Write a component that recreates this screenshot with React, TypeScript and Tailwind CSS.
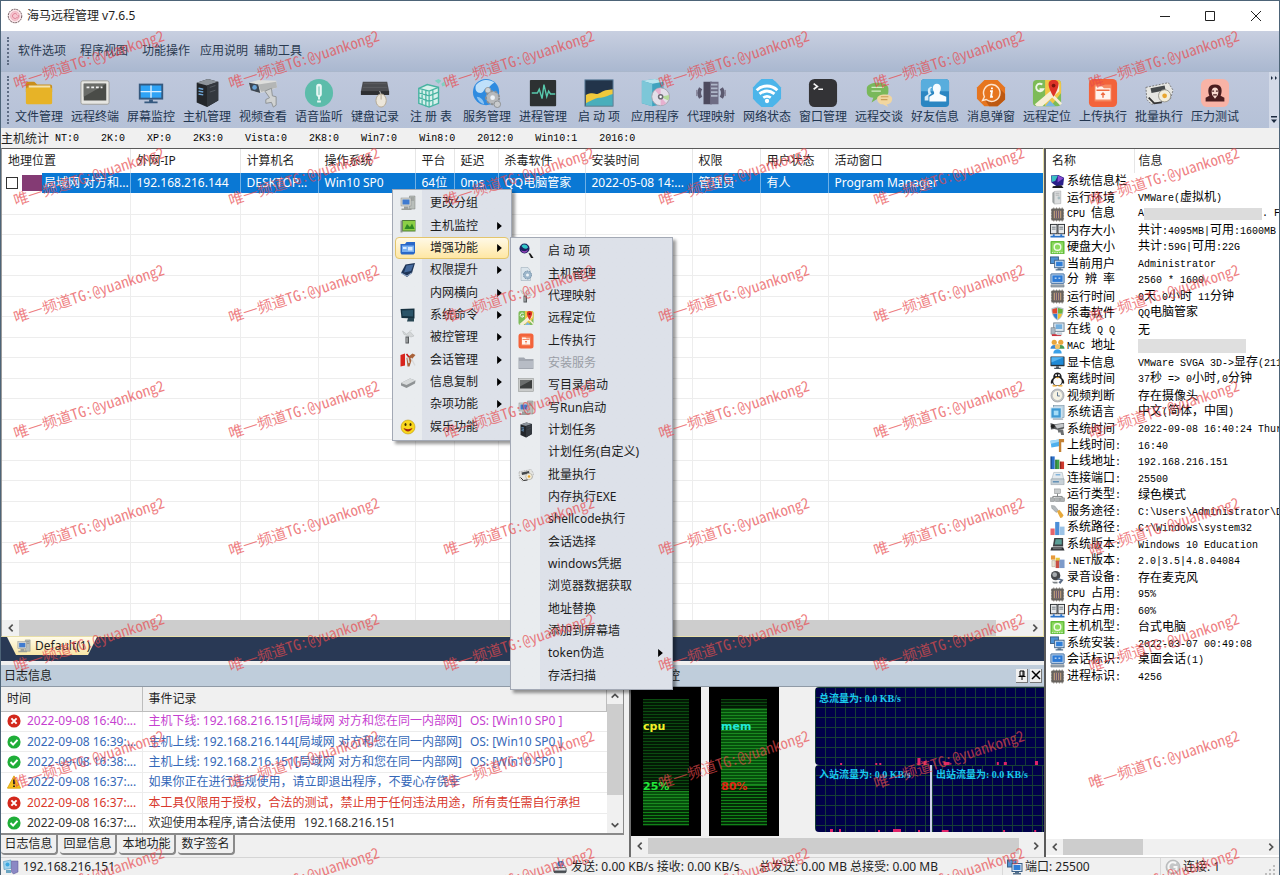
import React, { useState } from "react";

/* ---------- Icons (all drawn on a 32 x 32 grid) ---------- */

const ART: Record<string, React.ReactNode> = {
  folder: (
    <>
      <path d="M2 6a2 2 0 0 1 2-2h7l3 3h14a2 2 0 0 1 2 2v6H2z" fill="#c98f1c" />
      <path d="M5 8h23v6H5z" fill="#f2e3b0" />
      <path d="M2 12a2 2 0 0 1 2-2h24a2 2 0 0 1 2 2v14a2 2 0 0 1-2 2H4a2 2 0 0 1-2-2z" fill="#e7b327" />
    </>
  ),
  terminal: (
    <>
      <rect x="1" y="3" width="30" height="25" rx="2" fill="#e6e6e2" stroke="#9c9c98" />
      <rect x="4" y="6" width="24" height="18" fill="#4a4c48" />
      <path d="M4 6h24L4 20z" fill="#6a6c68" />
      <path d="M7 10h3M12 10h3M17 10h3M22 10h2" stroke="#f2f2f2" strokeWidth="2" />
    </>
  ),
  screen: (
    <>
      <rect x="3" y="6" width="26" height="17" fill="#35597f" />
      <rect x="5" y="8" width="22" height="13" fill="#2fa3f5" />
      <path d="M16 8v13M5 14.500h22" stroke="#d9efff" strokeWidth="1.500" />
      <path d="M14 23h4v2h-4zM9 25h14v2H9z" fill="#35597f" />
    </>
  ),
  server: (
    <>
      <path d="M5 5l12-4 11 3v20l-12 7L5 26z" fill="#23262a" />
      <path d="M5 5l12-4 11 3-12 4z" fill="#8d949b" />
      <path d="M16 8l12-4v20l-12 7z" fill="#33383e" />
      <path d="M7 11l5 1M7 14l5 1M7 17l5 1" stroke="#6fa7d8" strokeWidth="1.500" />
      <path d="M19 10l6-2M19 15l6-2" stroke="#555b61" />
    </>
  ),
  camera: (
    <>
      <path d="M1 5l10-3 19 1 1 7-12 5-8 1-9-4z" fill="#dededc" />
      <path d="M1 5l10 2 2 9-10-3z" fill="#3d4652" />
      <circle cx="7" cy="10" r="2.500" fill="#6aa3d6" />
      <path d="M11 7l19-3 1 6-17 5z" fill="#b4b6b6" />
      <path d="M18 14l7-3 1 8 4 1v9l-3 2-2-5-6 1v-4l4-2z" fill="#d0d2d2" stroke="#8d9192" />
    </>
  ),
  voice: (
    <>
      <circle cx="16" cy="16" r="15" fill="#5cbcaa" />
      <path d="M16 6a3 3 0 0 1 3 3v8a3 3 0 0 1-6 0V9a3 3 0 0 1 3-3z" fill="#e8f7f4" />
      <path d="M16 7v16M14 25h4" stroke="#e8f7f4" strokeWidth="2" />
      <path d="M16 9v9" stroke="#5cbcaa" />
    </>
  ),
  keyboard: (
    <>
      <path d="M3 4h26l2 10v4H1v-4z" fill="#4b4c50" />
      <path d="M1 14h30v4H1z" fill="#2e2f32" />
      <path d="M4 6h24M3 10h26" stroke="#5d5e62" />
      <path d="M21 14c1 2 1 3 1 4" stroke="#ddd" fill="none" />
      <ellipse cx="22.500" cy="24" rx="5.500" ry="7" fill="#ece6da" stroke="#b3a892" />
      <path d="M22.500 17v6" stroke="#b3a892" />
    </>
  ),
  registry: (
    <>
      <path d="M3 11l9-4 12 3v17l-10 4-11-4z" fill="#d7f1ec" stroke="#47b3a1" strokeWidth="1.500" />
      <path d="M3 16l11 3 10-4M3 21l11 4 10-4M14 14v17M6.500 13v15M10.500 13v17M18 12v17M3 11l11 3 10-4" stroke="#47b3a1" fill="none" strokeWidth="1.300" />
      <path d="M20 3l4-2 3 2-3 3zM27 6l3-2 1 4-3 1z" fill="#7fd0c2" />
    </>
  ),
  service: (
    <>
      <circle cx="15" cy="15" r="14" fill="#2f8be0" />
      <path d="M4 8c4-6 14-8 20-3-4 1-4 5-9 6-3 1-2 5-6 5-4 0-6-3-5-8z" fill="#bfe0fa" />
      <path d="M5 20c4 0 7 3 8 8-4-1-7-4-8-8z" fill="#8cc3f2" />
      <circle cx="22" cy="21" r="7" fill="#b7b9bb" stroke="#8d9093" strokeWidth="2" strokeDasharray="3 2" />
      <circle cx="22" cy="21" r="2.500" fill="#eef3f8" />
      <circle cx="27" cy="28" r="3.500" fill="#c9cbcd" stroke="#8d9093" />
      <circle cx="17" cy="13" r="3" fill="#cfd2d4" stroke="#9b9ea1" />
    </>
  ),
  process: (
    <>
      <rect x="2" y="2" width="28" height="28" rx="1" fill="#2d3132" />
      <path d="M4 16h6l2-4 3 10 2-15 3 13 2-6 2 3h5" stroke="#58c9ad" strokeWidth="1.500" fill="none" />
    </>
  ),
  startup: (
    <>
      <rect x="1" y="2" width="30" height="28" fill="#22344a" />
      <path d="M2 18c5-2 7-2 11-1 4 0 6-3 10-4 3 0 5-1 8-1v18H2z" fill="#f0c93c" />
      <path d="M2 27c7-4 11-6 16-6 5-1 9-3 13-4v13H2z" fill="#48aebb" />
      <rect x="1" y="2" width="30" height="28" fill="none" stroke="#5c7f9c" />
    </>
  ),
  apps: (
    <>
      <path d="M2 3l14-2 9 3v24l-12 2-11-3z" fill="#3fa3bf" />
      <path d="M2 3l14-2 9 3-12 2z" fill="#b9e4ee" />
      <path d="M2 3l11 3v24L2 27z" fill="#7cc7d8" />
      <circle cx="22" cy="20" r="9.500" fill="#e3dfe9" stroke="#a6a2ae" />
      <path d="M22 20l-6-7a9 9 0 0 1 6-2zM22 20l6 7a9 9 0 0 1-6 2z" fill="#e6b0cf" />
      <path d="M22 20l9-2a9 9 0 0 1-1 6z" fill="#b4d99a" />
      <circle cx="22" cy="20" r="3" fill="#6c6a74" />
      <circle cx="22" cy="20" r="1.300" fill="#fff" />
    </>
  ),
  proxy: (
    <>
      <path d="M8 4h9v24H8z" fill="#4d4a5e" />
      <path d="M15 4h9v24h-9z" fill="#6e6c84" />
      <path d="M16 7h7M16 11h7M16 15h7M16 19h7" stroke="#aeb6c8" strokeWidth="2" />
      <path d="M5 11c-2 3-2 7 0 10M27 11c2 3 2 7 0 10" stroke="#5c5a70" strokeWidth="4" fill="none" />
      <path d="M1 13c-1 2-1 4 0 6M31 13c1 2 1 4 0 6" stroke="#8d8ba0" strokeWidth="2" fill="none" />
    </>
  ),
  wifi: (
    <>
      <path d="M10 1h12l9 9v12l-9 9H10l-9-9V10z" fill="#4cb5ea" />
      <circle cx="16" cy="16" r="15" fill="#4cb5ea" />
      <path d="M5 13c6-6 16-6 22 0M8 17c5-4 11-4 16 0M12 21c3-2 5-2 8 0" stroke="#fff" strokeWidth="3" fill="none" />
      <circle cx="16" cy="24.500" r="2.300" fill="#fff" />
    </>
  ),
  windowcmd: (
    <>
      <rect x="1" y="1" width="30" height="30" rx="6" fill="#333336" />
      <path d="M6 6l4 3-4 3M11 12h5" stroke="#f4f4f4" strokeWidth="1.800" fill="none" />
    </>
  ),
  chat: (
    <>
      <path d="M3 11c0-8 23-8 23 0v4c0 5-6 6-10 6l-8 5 2-5c-5 0-7-3-7-6z" fill="#79b85a" />
      <path d="M8 10h13M8 14h10" stroke="#d5ecc8" strokeWidth="1.500" />
      <path d="M14 22c0-6 16-6 16 0 0 4-3 6-6 6l2 3-6-3c-4 0-6-3-6-6z" fill="#f1d6a0" />
      <path d="M18 20h8M18 23h7" stroke="#c99e55" strokeWidth="1.300" />
    </>
  ),
  friends: (
    <>
      <rect x="1" y="1" width="30" height="30" rx="4" fill="#2a86c2" />
      <path d="M1 5a4 4 0 0 1 4-4h22a4 4 0 0 1 4 4v9H1z" fill="#58addd" />
      <path d="M15 15c-2-3-2-9 3-9s5 6 3 9v2l7 3v5H10v-5l5-3z" fill="#f7fcff" />
      <path d="M11 17c-1-2-2-4-1-6 0-2 3-2 3-1-4 1-1 8 0 6l-4 3v5H5v-4l4-3c-1-3-1-6 1-7" fill="#d6ebf7" />
    </>
  ),
  popup: (
    <>
      <path d="M9 2h14l8 8v13l-8 7H9l-8-8V10z" fill="#e6751f" />
      <path d="M24 10l7 7v6l-8 7h-9l-4-6z" fill="#bd5912" />
      <path d="M16 7a9 9 0 1 1-5 16l-4 1 2-4a9 9 0 0 1 7-13z" fill="#e6751f" stroke="#fde3cd" strokeWidth="1.500" />
      <path d="M17 10v2M15 14h2l-1 6h2" stroke="#fff" strokeWidth="2" fill="none" />
    </>
  ),
  map: (
    <>
      <rect x="1" y="2" width="30" height="28" rx="4" fill="#7dbb58" />
      <path d="M14 2h13a4 4 0 0 1 4 4v10L20 30h-6z" fill="#f0c646" />
      <path d="M3 28L29 6v8L11 30H5z" fill="#f6eed6" />
      <path d="M14 30l5-6 6 6z" fill="#7ab6e3" />
      <path d="M20 17l11 11" stroke="#f6eed6" strokeWidth="3" />
      <path d="M11 7a4 4 0 1 0 1 5H8" stroke="#eef7e8" strokeWidth="2" fill="none" />
      <path d="M23 2c8 0 6 8 0 18C17 10 15 2 23 2z" fill="#dd3327" />
      <circle cx="23" cy="8" r="2" fill="#7c140d" />
    </>
  ),
  upload: (
    <>
      <rect x="1" y="1" width="30" height="30" rx="5" fill="#f3633a" />
      <rect x="7" y="7" width="18" height="18" fill="#f68a62" />
      <path d="M8 9h7l2 2h7v12H8z" fill="#fff4ee" />
      <path d="M9 13h14M16 21v-5M14 18l2-2 2 2" stroke="#ee6b42" strokeWidth="1.500" fill="none" />
    </>
  ),
  batch: (
    <>
      <path d="M2 10l24-5 5 8-3 10-20 5-5-5z" fill="#e6e6e2" stroke="#777" strokeDasharray="2 1.500" />
      <path d="M7 11l15-3 1 5-15 3z" fill="#45494b" />
      <circle cx="22" cy="19" r="6.500" fill="#f3eedb" stroke="#96958e" />
      <circle cx="22" cy="19" r="2.500" fill="#e9a62e" />
      <path d="M5 21l6 6 8-1" stroke="#333" strokeWidth="2" fill="none" />
    </>
  ),
  stress: (
    <>
      <rect x="1" y="1" width="30" height="30" rx="7" fill="#f8b3a6" />
      <path d="M16 7c8 0 8 7 6 12l4 2v4H6v-4l4-2C8 14 8 7 16 7z" fill="#4a1d1f" />
      <path d="M16 10c4 0 4 5 3 8l-3 4-3-4c-1-3-1-8 3-8z" fill="#f7d9cf" />
      <path d="M13 14h2M17 14h2M14 18h4" stroke="#4a1d1f" strokeWidth="1.300" />
    </>
  ),
  gem: (
    <>
      <circle cx="16" cy="16" r="13.500" fill="#fbe5e9" stroke="#6b5257" strokeWidth="2" strokeDasharray="4 1.500" />
      <circle cx="16" cy="16" r="9" fill="#f6c6d0" stroke="#e3a0af" />
      <path d="M20 13a5 5 0 1 0 0 6c2 2 4-1 2-5" stroke="#dd7d92" strokeWidth="1.800" fill="none" />
    </>
  ),
  pc: (
    <>
      <path d="M19 2h11v26H19z" fill="#b9beba" stroke="#7d827e" />
      <path d="M22 6h6M22 10h6" stroke="#666" />
      <rect x="2" y="6" width="20" height="16" fill="#d6d6ce" stroke="#84888a" />
      <rect x="5" y="9" width="14" height="10" fill="#3f7bd0" />
      <path d="M8 23h9v4H8zM3 27h20v3H3z" fill="#9a9e9b" />
    </>
  ),
  chipgreen: (
    <>
      <rect x="4" y="4" width="27" height="23" fill="#4f7a35" />
      <rect x="6" y="6" width="24" height="19" fill="#8ccf46" />
      <path d="M9 22l5-10 6 6 4-7 5 11z" fill="#2f8a22" />
      <path d="M1 5h4v24H1z" fill="#8f9492" />
    </>
  ),
  bluebox: (
    <>
      <path d="M1 8h9l3-4h17v22l-3 3H3l-2-3z" fill="#2a68c8" />
      <path d="M4 11h24v13H4z" fill="#79b0f0" />
      <path d="M6 14h7v4H6zM16 14h9v7h-9z" fill="#d9ebff" />
    </>
  ),
  book: (
    <>
      <path d="M11 5l19-3-6 20-10 8L2 22z" fill="#1f3557" />
      <path d="M13 7l14-2-5 13-14 3z" fill="#44699c" />
      <path d="M2 22l12 6 9-6" stroke="#9eb6d6" strokeWidth="2" fill="none" />
    </>
  ),
  monitor: (
    <>
      <path d="M1 4l28-1v20L3 22z" fill="#16313f" />
      <path d="M4 7l22-1v13L5 18z" fill="#2b5468" />
      <path d="M16 22h12v7H14z" fill="#274552" />
    </>
  ),
  pin: (
    <>
      <path d="M5 4l8 6 7-5 8 9-6 2-7-3-7-2z" fill="#d3d6d7" stroke="#b0b4b6" />
      <path d="M11 15h7v14h-7z" fill="#55595b" />
      <path d="M14 17v10M18 5l6-3" stroke="#d4d7d8" strokeWidth="2" />
    </>
  ),
  cards: (
    <>
      <path d="M1 6l9-3v24L1 29z" fill="#d8231c" />
      <path d="M13 12l12-9 6 3-7 8-5 15h-4z" fill="#a9623a" />
      <path d="M15 6l3 16M22 12l8 15" stroke="#dadada" strokeWidth="3" />
      <path d="M13 4l5 6" stroke="#c31414" strokeWidth="3" />
    </>
  ),
  disk: (
    <>
      <path d="M2 18l18-9 11 4-1 6-17 9-11-5z" fill="#8f9395" />
      <path d="M2 18l18-9 11 4-18 9z" fill="#d7dadb" />
    </>
  ),
  smile: (
    <>
      <circle cx="16" cy="16" r="14" fill="#f9d71c" stroke="#b08d0a" />
      <ellipse cx="11" cy="11" rx="2" ry="3" fill="#3b2c00" />
      <ellipse cx="21" cy="11" rx="2" ry="3" fill="#3b2c00" />
      <path d="M7 18c4 9 14 9 18 0-5 3-13 3-18 0z" fill="#a2280e" />
    </>
  ),
  lens: (
    <>
      <circle cx="13" cy="11" r="10" fill="#1c2360" />
      <path d="M7 6c4-5 12-3 13 3-4 5-10 2-13-3z" fill="#31c6c8" />
      <path d="M6 14c5 4 10 3 14-1-2 8-11 9-14 1z" fill="#a144c0" />
      <path d="M21 20l4 1 6 9h-5z" fill="#161616" />
    </>
  ),
  gearpc: (
    <>
      <path d="M6 3h14l5 7v19H6z" fill="#dbe5ec" stroke="#94a5b3" />
      <circle cx="19" cy="18" r="8" fill="#9db7cb" stroke="#7490a8" strokeDasharray="3 2" strokeWidth="2" />
      <circle cx="19" cy="18" r="3" fill="#eef4f8" />
    </>
  ),
  folderoff: (
    <>
      <path d="M1 5h11l3 3h16v20H1z" fill="#a2a7b0" />
      <path d="M2 12h28v14H2z" fill="#b7bcc5" />
    </>
  ),
  consolebox: (
    <>
      <rect x="1" y="3" width="30" height="26" fill="#c9cbca" stroke="#8b8d8c" />
      <rect x="4" y="6" width="24" height="17" fill="#3c3f3e" />
      <path d="M4 6h24L4 19z" fill="#6b6e6d" />
    </>
  ),
  sphere: (
    <>
      <path d="M2 3l16-1 12 6-2 16-14 2L3 18z" fill="#2a1f8a" />
      <path d="M3 4l14-1-6 12-7 2z" fill="#3ac1c3" />
      <path d="M17 3l12 6-13 9z" fill="#8a4bd0" />
      <path d="M6 26l18-2 5 6H5z" fill="#1d1d22" />
    </>
  ),
  tower: (
    <>
      <path d="M9 3l14-1v27l-14 1z" fill="#dcdedf" stroke="#989b9c" />
      <path d="M12 7h8M12 11h8" stroke="#9fa3a4" strokeWidth="1.500" />
      <circle cx="19" cy="17" r="3" fill="#a9bdc2" />
      <path d="M5 6l4-3v27l-4-4z" fill="#9da2a3" />
    </>
  ),
  cpu: (
    <>
      <path d="M2 7h28M2 13h28M2 19h28M2 25h28M8 1v30M14 1v30M20 1v30M26 1v30" stroke="#8f8a80" strokeWidth="2" />
      <rect x="3" y="3" width="26" height="26" rx="2" fill="#66625e" />
      <rect x="8" y="8" width="16" height="16" fill="#b99a78" />
      <path d="M12 8v16M16 8v16M20 8v16" stroke="#5f4f6e" strokeWidth="2" />
    </>
  ),
  ram: (
    <>
      <rect x="1" y="3" width="14" height="20" fill="#e6e8ea" stroke="#2b2f33" strokeWidth="2" />
      <rect x="17" y="3" width="14" height="20" fill="#e6e8ea" stroke="#2b2f33" strokeWidth="2" />
      <path d="M4 9h8M4 13h8M20 9h8M20 13h8" stroke="#6d747b" strokeWidth="2" />
      <path d="M8 24v4M24 24v4M1 29h30" stroke="#2a74cc" strokeWidth="4" fill="none" />
    </>
  ),
  hdd: (
    <>
      <rect x="1" y="2" width="30" height="28" rx="2" fill="#62bd3a" />
      <path d="M4 5h24v22H4z" fill="#8bd95f" />
      <circle cx="16" cy="15" r="7" fill="none" stroke="#f0fbe8" strokeWidth="3" />
      <path d="M4 27h24" stroke="#e9f7df" strokeWidth="2" strokeDasharray="3 2" />
    </>
  ),
  twopc: (
    <>
      <rect x="1" y="2" width="17" height="14" fill="#4f92d4" stroke="#3b5f85" strokeWidth="2" />
      <rect x="10" y="9" width="20" height="16" fill="#e4edf6" stroke="#3b5f85" strokeWidth="2" />
      <rect x="13" y="12" width="14" height="10" fill="#2f7ed8" />
      <path d="M16 26h8v2h4v3H12v-3h4z" fill="#54708c" />
    </>
  ),
  display: (
    <>
      <rect x="2" y="2" width="28" height="20" rx="1" fill="#cfe3f7" stroke="#2f5e94" strokeWidth="2" />
      <rect x="5" y="5" width="22" height="14" fill="#2e7bd6" />
      <path d="M10 11h4M18 11h4" stroke="#fff" strokeWidth="2" />
      <path d="M2 25h28v5H2z" fill="#9aa7b3" stroke="#66727d" />
    </>
  ),
  shield: (
    <>
      <path d="M16 1l13 4c0 13-4 21-13 26C7 26 3 18 3 5z" fill="#b9c4cc" />
      <path d="M15 4v12H6C5 12 5 9 5 7z" fill="#e0492f" />
      <path d="M17 4v12h9c1-4 1-7 1-9z" fill="#6bb43a" />
      <path d="M15 17v11C10 25 8 22 6.500 17z" fill="#2f7ed0" />
      <path d="M17 17v11c5-3 7-6 8.500-11z" fill="#f3c22b" />
    </>
  ),
  netpc: (
    <>
      <rect x="8" y="2" width="22" height="18" fill="#dfe9f1" stroke="#6f8192" strokeWidth="2" />
      <rect x="12" y="5" width="14" height="10" fill="#72aede" />
      <path d="M2 12h9v14H2z" fill="#aab7c2" stroke="#66717b" />
      <path d="M4 28h20" stroke="#c8303c" strokeWidth="4" />
      <path d="M14 22h12v6H14z" fill="#c6d1da" />
    </>
  ),
  users: (
    <>
      <circle cx="9" cy="7" r="5.500" fill="#e9a53c" />
      <circle cx="23" cy="7" r="5.500" fill="#e9a53c" />
      <path d="M1 21c0-11 16-11 16 0z" fill="#3f87cf" />
      <path d="M15 21c0-11 16-11 16 0z" fill="#4a9b54" />
      <circle cx="16" cy="16" r="5.500" fill="#f6c469" />
      <path d="M7 31c0-12 18-12 18 0z" fill="#3aa0e8" />
    </>
  ),
  lcd: (
    <>
      <rect x="1" y="3" width="30" height="21" rx="1" fill="#27313a" />
      <rect x="3" y="5" width="26" height="16" fill="#1f8ad6" />
      <path d="M3 5h26L3 16z" fill="#56b4f0" />
      <path d="M13 24h6v3h4v3H9v-3h4z" fill="#4a5660" />
    </>
  ),
  penguin: (
    <>
      <path d="M16 1c7 0 9 6 9 11 5 4 6 9 5 13l-4-1c-1 4-5 6-10 6S7 28 6 24l-4 1c-1-4 0-9 5-13 0-5 2-11 9-11z" fill="#1d1d1f" />
      <path d="M16 12c7 0 9 4 9 9s-4 8-9 8-9-3-9-8 2-9 9-9z" fill="#fbfbfb" />
      <circle cx="13" cy="7" r="2" fill="#fff" />
      <circle cx="19" cy="7" r="2" fill="#fff" />
      <path d="M11 11h10l-5 3zM5 28h9v3H6zM18 28h9l-1 3h-8z" fill="#f2a51e" />
    </>
  ),
  clock: (
    <>
      <circle cx="16" cy="16" r="14" fill="#c0c3c4" stroke="#84888a" />
      <circle cx="16" cy="16" r="10" fill="#f6f3e4" />
      <path d="M16 9v8h5" stroke="#57718f" strokeWidth="2" fill="none" />
    </>
  ),
  lang: (
    <>
      <rect x="7" y="1" width="23" height="26" fill="#bdd3e2" stroke="#607d92" />
      <rect x="2" y="6" width="22" height="22" fill="#3f9ad4" stroke="#dcecf6" strokeWidth="2" />
      <rect x="8" y="12" width="10" height="10" fill="#a4dcf7" />
      <path d="M6 30h22" stroke="#778895" strokeWidth="2" />
    </>
  ),
  cam2: (
    <>
      <path d="M1 4l8 3 21-3v12l-12 3-9-2-7 1z" fill="#57595b" />
      <path d="M10 8l19-2v7l-14 3z" fill="#c5c8ca" />
      <circle cx="6" cy="11" r="4" fill="#222" />
      <path d="M16 18h12l2 12h-6l-2-6-4 1z" fill="#6b6e70" />
    </>
  ),
  flag: (
    <>
      <path d="M1 6l18-3 3 14-19 3z" fill="#4fb0ee" />
      <path d="M1 6l18-3 1 5-18 4z" fill="#a5daf8" />
      <path d="M19 2h11v7h-6v21h-5z" fill="#c48132" />
    </>
  ),
  bars: (
    <>
      <path d="M1 3h9v27H1z" fill="#2b6fca" />
      <path d="M11 10h9v20h-9z" fill="#3fa34a" />
      <path d="M21 14h9v16h-9z" fill="#cf3a2f" />
      <path d="M1 3h3v27H1zM11 10h3v20h-3zM21 14h3v16h-3z" fill="#000" opacity=".3" />
    </>
  ),
  drive: (
    <>
      <path d="M8 3h18l3 14H4z" fill="#e4eaee" stroke="#91a0aa" />
      <path d="M2 17h28v12H2z" fill="#c8d1d7" stroke="#84929b" />
      <path d="M6 23h13" stroke="#5d8db5" strokeWidth="3" />
      <path d="M12 8h10" stroke="#7db2da" strokeWidth="3" />
    </>
  ),
  tree: (
    <>
      <rect x="10" y="2" width="12" height="10" fill="#c9cccd" stroke="#7d8182" />
      <path d="M16 12v6M6 22v-4h20v4" stroke="#7d8182" strokeWidth="2" fill="none" />
      <rect x="1" y="21" width="9" height="8" fill="#aeb2b3" stroke="#7d8182" />
      <rect x="12" y="21" width="9" height="8" fill="#aeb2b3" stroke="#7d8182" />
      <rect x="22" y="21" width="9" height="8" fill="#aeb2b3" stroke="#7d8182" />
    </>
  ),
  tool: (
    <>
      <path d="M3 3l7 1 8 10-5 4L4 9z" fill="#b5babd" stroke="#7f8487" />
      <path d="M15 16l5-4 9 12-3 5-4 1z" fill="#e7a93b" />
    </>
  ),
  bars2: (
    <>
      <path d="M1 16h9v14H1z" fill="#e5636b" />
      <path d="M11 2h9v28h-9z" fill="#4c8fd8" />
      <path d="M21 12h10v18H21z" fill="#9cc3e6" />
    </>
  ),
  retro: (
    <>
      <path d="M9 2h19v18H6z" fill="#3c4043" />
      <path d="M12 5h13v11H10z" fill="#5b9e96" />
      <path d="M3 22h25l3 7H1z" fill="#2e3134" />
      <path d="M6 25h19" stroke="#9a9da0" strokeWidth="1.500" />
    </>
  ),
  net: (
    <>
      <path d="M2 3h9v9H2z" fill="#e79a3a" />
      <path d="M12 8h9v9h-9z" fill="#e7c43a" />
      <path d="M12 14h8v16h-8z" fill="#c84f46" />
      <path d="M20 12h11v18H20z" fill="#7d9ac9" />
      <path d="M4 14h7v13H4z" fill="#e8e2d2" stroke="#a59b83" />
    </>
  ),
  mic: (
    <>
      <circle cx="12" cy="12" r="10" fill="#46494c" />
      <circle cx="10" cy="10" r="5" fill="#a8adb0" />
      <path d="M17 17l12 4-7 9-4-4 5-4-8-2z" fill="#5b6c86" />
      <path d="M4 25h12v4H8z" fill="#7e8386" />
    </>
  ),
  fail: (
    <>
      <circle cx="16" cy="16" r="15" fill="#d3281c" />
      <path d="M10 10l12 12M22 10L10 22" stroke="#fff" strokeWidth="4.500" />
    </>
  ),
  ok: (
    <>
      <circle cx="16" cy="16" r="15" fill="#1fae38" />
      <path d="M8 16l6 6 10-11" stroke="#fff" strokeWidth="4.500" fill="none" />
    </>
  ),
  warn: (
    <>
      <path d="M16 2l15 28H1z" fill="#f6c21c" stroke="#d9a20d" strokeLinejoin="round" strokeWidth="2" />
      <path d="M16 10v11M16 24v3.500" stroke="#1a1a1a" strokeWidth="4" />
    </>
  ),
  hosts: (
    <>
      <path d="M1 5l15-3v17L2 21z" fill="#9ed3ef" stroke="#3b86ae" />
      <path d="M17 4h13v22l-9 4-4-4z" fill="#8b88c4" stroke="#56538e" />
      <path d="M6 22h10v6H6z" fill="#6aa5c3" />
      <circle cx="9" cy="11" r="4" fill="#3aa7e0" />
    </>
  ),
  transfer: (
    <>
      <rect x="2" y="17" width="28" height="12" rx="3" fill="#dfe3e6" stroke="#484d52" strokeWidth="2" />
      <path d="M2 24h28v3a2 2 0 0 1-2 2H4a2 2 0 0 1-2-2z" fill="#484d52" />
      <path d="M13 2h10l3 7-4 6h-9l-4-6z" fill="#2f7ac4" />
      <path d="M18 5v8M14 9h8" stroke="#cfe6fa" strokeWidth="2" />
    </>
  ),
  link: (
    <>
      <circle cx="16" cy="16" r="14" fill="#c4c6c7" stroke="#97999a" />
      <path d="M22 9a9 9 0 1 0 1 12v-5h-6" stroke="#f7f7f7" strokeWidth="4" fill="none" />
    </>
  ),
};

function Icon({ name, className }: { name: string; className: string }) {
  return (
    <svg viewBox="0 0 32 32" className={`shrink-0 ${className}`} aria-hidden="true">
      {ART[name]}
    </svg>
  );
}

/* ---------- Text helper: Chinese runs at 12px, Latin runs in a narrow mono ---------- */

function Mixed({ text }: { text: string }) {
  const runs = text.match(/[\u3000-\u9fff\uff00-\uffef]+|[^\u3000-\u9fff\uff00-\uffef]+/g) ?? [];
  return (
    <>
      {runs.map((run, i) =>
        /[\u3000-\u9fff\uff00-\uffef]/.test(run) ? (
          <span key={i}>{run}</span>
        ) : (
          <span key={i} className="font-['Liberation_Mono',monospace] text-[10px] whitespace-pre">{run}</span>
        ),
      )}
    </>
  );
}

/* ---------- Data ---------- */

const MENUS = [
  ["软件选项", "mr-3.5"],
  ["程序视图", "mr-3.5"],
  ["功能操作", "mr-2.5"],
  ["应用说明", "mr-1.5"],
  ["辅助工具", ""],
];

const TOOLS = [
  ["folder", "文件管理"], ["terminal", "远程终端"], ["screen", "屏幕监控"], ["server", "主机管理"],
  ["camera", "视频查看"], ["voice", "语音监听"], ["keyboard", "键盘记录"], ["registry", "注 册 表"],
  ["service", "服务管理"], ["process", "进程管理"], ["startup", "启 动 项"], ["apps", "应用程序"],
  ["proxy", "代理映射"], ["wifi", "网络状态"], ["windowcmd", "窗口管理"], ["chat", "远程交谈"],
  ["friends", "好友信息"], ["popup", "消息弹窗"], ["map", "远程定位"], ["upload", "上传执行"],
  ["batch", "批量执行"], ["stress", "压力测试"],
];

const STATS = ["NT:0", "2K:0", "XP:0", "2K3:0", "Vista:0", "2K8:0", "Win7:0", "Win8:0", "2012:0", "Win10:1", "2016:0"];

const COLUMNS = [
  ["地理位置", "w-[128px]", "局域网 对方和..."],
  ["外网-IP", "w-[110px]", "192.168.216.144"],
  ["计算机名", "w-[78px]", "DESKTOP..."],
  ["操作系统", "w-[97px]", "Win10 SP0"],
  ["平台", "w-[39px]", "64位"],
  ["延迟", "w-[44px]", "0ms"],
  ["杀毒软件", "w-[87px]", "QQ电脑管家"],
  ["安装时间", "w-[107px]", "2022-05-08 14:..."],
  ["权限", "w-[68px]", "管理员"],
  ["用户状态", "w-[68px]", "有人"],
  ["活动窗口", "", "Program Manager"],
];

const EMPTY_ROWS = Array.from({ length: 21 }, (_, i) => i);

const INFO = [
  ["sphere", "系统信息栏", ""],
  ["tower", "运行环境", "VMWare(虚拟机)"],
  ["cpu", "CPU 信息", "cpu-masked"],
  ["ram", "内存大小", "共计:4095MB|可用:1600MB"],
  ["hdd", "硬盘大小", "共计:59G|可用:22G"],
  ["twopc", "当前用户", "Administrator"],
  ["display", "分 辨 率", "2560 * 1600"],
  ["cpu", "运行时间", "0天 0小时 11分钟"],
  ["shield", "杀毒软件", "QQ电脑管家"],
  ["netpc", "在线 Q Q", "无"],
  ["users", "MAC 地址", "mac-masked"],
  ["lcd", "显卡信息", "VMware SVGA 3D->显存(211"],
  ["penguin", "离线时间", "37秒 => 0小时,0分钟"],
  ["clock", "视频判断", "存在摄像头"],
  ["lang", "系统语言", "中文(简体，中国)"],
  ["cam2", "系统时间", "2022-09-08 16:40:24 Thur"],
  ["flag", "上线时间:", "16:40"],
  ["bars", "上线地址:", "192.168.216.151"],
  ["drive", "连接端口:", "25500"],
  ["tree", "运行类型:", "绿色模式"],
  ["tool", "服务途径:", "C:\\Users\\Administrator\\D"],
  ["bars2", "系统路径:", "C:\\Windows\\system32"],
  ["retro", "系统版本:", "Windows 10 Education"],
  ["net", ".NET版本:", "2.0|3.5|4.8.04084"],
  ["mic", "录音设备:", "存在麦克风"],
  ["cpu", "CPU 占用:", "95%"],
  ["ram", "内存占用:", "60%"],
  ["hdd", "主机机型:", "台式电脑"],
  ["twopc", "系统安装:", "2022-03-07 00:49:08"],
  ["display", "会话标识:", "桌面会话(1)"],
  ["cpu", "进程标识:", "4256"],
];

const LOGS = [
  ["fail", "2022-09-08 16:40:...", "主机下线: 192.168.216.151[局域网 对方和您在同一内部网]", "OS: [Win10 SP0 ]", "text-[#c63fd0]"],
  ["ok", "2022-09-08 16:39:...", "主机上线: 192.168.216.144[局域网 对方和您在同一内部网]", "OS: [Win10 SP0 ]", "text-[#3568b8]"],
  ["ok", "2022-09-08 16:38:...", "主机上线: 192.168.216.151[局域网 对方和您在同一内部网]", "OS: [Win10 SP0 ]", "text-[#3568b8]"],
  ["warn", "2022-09-08 16:37:...", "如果你正在进行违规使用，请立即退出程序，不要心存侥幸", "", "text-[#3568b8]"],
  ["fail", "2022-09-08 16:37:...", "本工具仅限用于授权，合法的测试，禁止用于任何违法用途，所有责任需自行承担", "", "text-[#d8382c]"],
  ["ok", "2022-09-08 16:37:...", "欢迎使用本程序,请合法使用", "192.168.216.151", "text-[#333]"],
];

type Item = { icon?: string; label: string; arrow?: boolean; active?: boolean; off?: boolean };

const MENU: Item[] = [
  { icon: "pc", label: "更改分组" },
  { icon: "chipgreen", label: "主机监控", arrow: true },
  { icon: "bluebox", label: "增强功能", arrow: true, active: true },
  { icon: "book", label: "权限提升", arrow: true },
  { label: "内网横向", arrow: true },
  { icon: "monitor", label: "系统命令", arrow: true },
  { icon: "pin", label: "被控管理", arrow: true },
  { icon: "cards", label: "会话管理", arrow: true },
  { icon: "disk", label: "信息复制", arrow: true },
  { label: "杂项功能", arrow: true },
  { icon: "smile", label: "娱乐功能" },
];

const SUBMENU: Item[] = [
  { icon: "lens", label: "启 动 项" },
  { icon: "gearpc", label: "主机管理" },
  { icon: "pin", label: "代理映射" },
  { icon: "map", label: "远程定位" },
  { icon: "upload", label: "上传执行" },
  { icon: "folderoff", label: "安装服务", off: true },
  { icon: "consolebox", label: "写目录启动" },
  { icon: "pc", label: "写Run启动" },
  { icon: "server", label: "计划任务" },
  { label: "计划任务(自定义)" },
  { icon: "batch", label: "批量执行" },
  { label: "内存执行EXE" },
  { label: "shellcode执行" },
  { label: "会话选择" },
  { label: "windows凭据" },
  { label: "浏览器数据获取" },
  { label: "地址替换" },
  { label: "添加到屏幕墙" },
  { label: "token伪造", arrow: true },
  { label: "存活扫描" },
];

/* ---------- Pieces ---------- */

function Chevron({ dir }: { dir: "left" | "right" | "up" | "down" }) {
  const d = { left: "M8 2L4 6l4 4", right: "M4 2l4 4-4 4", up: "M2 8l4-4 4 4", down: "M2 4l4 4 4-4" }[dir];
  return (
    <svg viewBox="0 0 12 12" className="size-2.5" aria-hidden="true">
      <path d={d} fill="none" stroke="#505050" strokeWidth="2" />
    </svg>
  );
}

function HBar({ thumb }: { thumb: string }) {
  return (
    <div className="flex h-4 shrink-0 bg-[#f0f0f0]">
      <button aria-label="向左滚动" className="grid w-[17px] place-items-center"><Chevron dir="left" /></button>
      <div className="flex flex-1"><div className={`bg-[#cdcdcd] ${thumb}`} /></div>
      <button aria-label="向右滚动" className="grid w-[17px] place-items-center"><Chevron dir="right" /></button>
    </div>
  );
}

function Menu({ items, className, label }: { items: Item[]; className: string; label: string }) {
  return (
    <div
      role="menu"
      aria-label={label}
      className={`absolute flex flex-col border border-[#a3a9b5] bg-linear-to-r from-[#e9ecef] from-[29px] to-[#dde1e9] to-[29px] py-0.5 shadow-[3px_3px_3px_rgba(0,0,0,0.4)] ${className}`}
    >
      {items.map((it) => (
        <button
          key={it.label}
          role="menuitem"
          disabled={it.off}
          className={`mx-0.5 flex flex-1 items-center rounded-sm border pl-1 pr-1.5 text-left ${
            it.active ? "border-[#e3c56c] bg-linear-to-b from-[#fff9e6] to-[#ffe7a3]" : "border-transparent"
          } ${it.off ? "text-[#9a9ea6]" : "text-[#1c1c1c]"}`}
        >
          {it.icon ? <Icon name={it.icon} className="size-4" /> : <span className="size-4 shrink-0" />}
          <span className="ml-3.5 flex-1 whitespace-nowrap">{it.label}</span>
          {it.arrow && (
            <svg viewBox="0 0 6 10" className="h-2 w-[5px]" aria-hidden="true">
              <path d="M0 0l6 5-6 5z" fill="#000" />
            </svg>
          )}
        </button>
      ))}
    </div>
  );
}

function Meter({ name, value, nameColor, valueColor, dim, lit, tail }: {
  name: string; value: string; nameColor: string; valueColor: string; dim: string; lit: string; tail: string;
}) {
  return (
    <div className="flex w-[70px] bg-black px-3 pt-3 pb-2.5">
      <div className="relative flex flex-1 flex-col">
        <div className={`bg-[repeating-linear-gradient(#0b4a10_0_1px,#031a05_1px_3px)] ${dim}`} />
        <div className={`bg-[repeating-linear-gradient(#1a8a20_0_1px,#06500c_1px_3px)] ${lit}`} />
        <div className={`bg-[repeating-linear-gradient(#118218_0_1px,#032c06_1px_3px)] ${tail}`} />
        <span className={`absolute top-5 left-0 font-['DejaVu_Sans',sans-serif] text-[11px] font-bold ${nameColor}`}>{name}</span>
        <span className={`absolute top-20 left-0 font-['DejaVu_Sans',sans-serif] text-[11px] font-bold ${valueColor}`}>{value}</span>
      </div>
    </div>
  );
}

const GRID = "bg-[#00004a] bg-[linear-gradient(#173f35_1px,transparent_1px),linear-gradient(90deg,#173f35_1px,transparent_1px)] bg-size-[10px_10px]";

function Blips({ points, span }: { points: number[][]; span: number }) {
  return (
    <svg viewBox={`0 0 ${span} 8`} preserveAspectRatio="none" className="absolute inset-x-0 bottom-0 h-2 w-full" aria-hidden="true">
      {points.map(([x, w, h]) => (
        <rect key={x} x={x} y={8 - h} width={w} height={h} fill="#e0256a" />
      ))}
    </svg>
  );
}

function Watermarks() {
  return (
    <div aria-hidden="true" className="pointer-events-none absolute inset-0 overflow-hidden">
      <div className="-ml-5 grid h-[933px] w-[1290px] grid-cols-6 grid-rows-8">
        {Array.from({ length: 48 }, (_, i) => (
          <div key={i} className="grid place-items-center">
            <span className="-rotate-[18deg] font-['Noto_Sans_Mono_CJK_SC','Noto_Sans_CJK_SC',sans-serif] text-[15px] leading-5 whitespace-nowrap text-[#e8494d]/70">
              唯一频道TG:@yuankong2
            </span>
          </div>
        ))}
      </div>
    </div>
  );
}

/* ---------- Page ---------- */

export default function App() {
  const [checked, setChecked] = useState(false);

  return (
    <div className="relative flex h-screen min-w-[1240px] flex-col overflow-hidden border-x border-t border-[#4d6478] bg-[#f0f0f0] font-['Noto_Sans','Noto_Sans_CJK_SC',sans-serif] text-[12px] leading-4 text-[#1e1e1e]">
      {/* Title bar */}
      <header className="flex h-[30px] shrink-0 items-center bg-white pl-1.5">
        <Icon name="gem" className="size-4" />
        <h1 className="ml-1 flex-1">海马远程管理 v7.6.5</h1>
        <button aria-label="最小化" className="grid h-full w-11 place-items-center">
          <svg viewBox="0 0 10 10" className="size-2.5"><path d="M0 5.500h10" stroke="#222" /></svg>
        </button>
        <button aria-label="最大化" className="grid h-full w-[46px] place-items-center">
          <svg viewBox="0 0 10 10" className="size-2.5"><path d="M.5.5h9v9h-9z" fill="none" stroke="#222" /></svg>
        </button>
        <button aria-label="关闭" className="grid h-full w-[46px] place-items-center">
          <svg viewBox="0 0 10 10" className="size-2.5"><path d="M0 0l10 10M10 0L0 10" stroke="#222" /></svg>
        </button>
      </header>

      {/* Menu bar */}
      <nav className="flex h-[41px] shrink-0 items-center border-b border-[#aab7cb] bg-linear-to-b from-[#c8cfe0] to-[#aab8d0] pl-1.5 text-[#2a3a50]">
        <span className="mr-[9px] h-7 border-l-2 border-dotted border-[#5f6d84]" />
        {MENUS.map(([m, gap]) => (
          <button key={m} className={`w-12 whitespace-nowrap ${gap}`}>{m}</button>
        ))}
      </nav>

      {/* Toolbar */}
      <div className="flex h-14 shrink-0 bg-linear-to-b from-[#bfc8dc] to-[#b5c1d7] pl-1.5 text-[#22354f]">
        <span className="mt-1 h-12 border-l-2 border-dotted border-[#5f6d84]" />
        <div className="flex flex-1 overflow-hidden pl-0.5">
          {TOOLS.map(([icon, label]) => (
            <button key={label} className="flex w-14 shrink-0 flex-col items-center pt-1.5">
              <Icon name={icon} className="size-[30px]" />
              <span className="leading-[18px] whitespace-nowrap">{label}</span>
            </button>
          ))}
        </div>
        <button aria-label="更多工具" className="flex w-2.5 flex-col items-center justify-between bg-[#d3dae8] py-1">
          <svg viewBox="0 0 8 4" className="h-1 w-2"><path d="M1 0l2 2-2 2zM5 0l2 2-2 2z" fill="#1c2a40" /></svg>
          <svg viewBox="0 0 8 8" className="size-2"><path d="M1 0h6v1.500H1zM1 3.500h6L4 7z" fill="#1c2a40" /></svg>
        </button>
      </div>

      {/* Host counters */}
      <div className="flex h-5 shrink-0 items-center gap-[22px] pt-0.5">
        <span className="-mr-4">主机统计</span>
        {STATS.map((s) => (
          <span key={s} className="font-['Liberation_Mono',monospace] text-[10px] text-black">{s}</span>
        ))}
      </div>

      <div className="flex min-h-0 flex-1">
        {/* Left side */}
        <div className="flex min-w-0 flex-1 flex-col">
          <section className="flex min-h-0 flex-1 flex-col border-t border-r border-b border-l border-t-[#5a5a5a] border-r-[#e8dfa8] border-b-[#e8dfa8] border-l-[#9b9b9b] bg-white">
            <div className="min-h-0 flex-1 overflow-hidden">
              <table className="w-full table-fixed border-collapse">
                <thead>
                  <tr className="h-6">
                    {COLUMNS.map(([name, width]) => (
                      <th key={name} className={`border-r border-[#e6e6e6] px-1.5 py-0 text-left font-normal last:border-r-0 ${width}`}>{name}</th>
                    ))}
                  </tr>
                </thead>
                <tbody>
                  <tr className="h-5 bg-[#0a78d4] text-white">
                    {COLUMNS.map(([name, , value], i) => (
                      <td key={name} className="overflow-hidden border-r border-[#6fb0e6] p-0 whitespace-nowrap last:border-r-0">
                        {i === 0 ? (
                          <div className="flex items-center bg-white">
                            <input
                              type="checkbox"
                              aria-label="选择主机"
                              checked={checked}
                              onChange={() => setChecked(!checked)}
                              className="mx-1 size-3 shrink-0 appearance-none border border-[#333] bg-white checked:bg-[#0a78d4]"
                            />
                            <span className="h-4 w-5 shrink-0 bg-[#843b74]" />
                            <span className="flex-1 bg-[#0a78d4] py-0.5 pl-0.5">{value}</span>
                          </div>
                        ) : (
                          <span className="px-1.5">{value}</span>
                        )}
                      </td>
                    ))}
                  </tr>
                  {EMPTY_ROWS.map((r) => (
                    <tr key={r} className="h-5 border-b border-[#ededed] even:h-[21px]">
                      {COLUMNS.map(([name]) => (
                        <td key={name} className="border-r border-[#ededed] p-0 last:border-r-0" />
                      ))}
                    </tr>
                  ))}
                </tbody>
              </table>
            </div>
            <HBar thumb="w-[97%]" />
          </section>

          <div className="flex h-6 shrink-0 items-start bg-[#293955] pl-1.5">
            <button className="flex h-[18px] w-[90px] items-center gap-1 bg-linear-to-b from-[#fffbe9] to-[#f8e6a6] pl-2.5 [clip-path:polygon(0_0,100%_0,90%_100%,10%_100%)]">
              <Icon name="pc" className="size-3.5" />
              Default(1)
            </button>
          </div>

          <div className="mt-1 flex h-[22px] shrink-0 items-center border-b border-[#8f9aa6] bg-[#bfcddb] pl-[3px]">
            <h2 className="w-[664px]">日志信息</h2>
            <h2 className="flex-1">控</h2>
            <button aria-label="固定" className="grid h-3.5 w-3 place-items-center border-r border-b border-[#777] bg-[#f0f0f0]">
              <svg viewBox="0 0 10 10" className="size-2.5"><path d="M3 1h4v5H3zM1.500 6.500h7M5 6v4M6 1v5" fill="none" stroke="#000" /></svg>
            </button>
            <button aria-label="关闭面板" className="mr-0.5 ml-0.5 grid h-3.5 w-3 place-items-center border-r border-b border-[#777] bg-[#f0f0f0]">
              <svg viewBox="0 0 10 10" className="size-2.5"><path d="M1 1l8 8M9 1L1 9" stroke="#000" strokeWidth="1.500" /></svg>
            </button>
          </div>

          <div className="flex h-[170px] shrink-0 gap-[5px]">
            {/* Log panel */}
            <section className="flex w-[623px] flex-col">
              <div className="flex h-[148px] border-b-2 border-[#8a8a8a] bg-white">
                <table className="h-full flex-1 table-fixed border-collapse">
                  <thead>
                    <tr className="h-6 border-b border-[#bdbdbd] bg-[#f0f0f0]">
                      <th className="w-[141px] border-r border-[#bdbdbd] pl-1.5 text-left font-normal">时间</th>
                      <th className="border-r border-[#bdbdbd] pl-1.5 text-left font-normal">事件记录</th>
                    </tr>
                  </thead>
                  <tbody>
                    {LOGS.map(([icon, time, text, extra, color], i) => (
                      <tr key={i} className={`border-b border-[#ececec] last:border-b-0 ${color}`}>
                        <td className="border-r border-[#ececec] p-0 pl-1.5">
                          <div className="flex items-center gap-1.5 whitespace-nowrap">
                            <Icon name={icon} className="size-3.5" />
                            {time}
                          </div>
                        </td>
                        <td className="overflow-hidden p-0 pl-1.5 whitespace-nowrap">
                          {text}
                          {extra && <span className="ml-2">{extra}</span>}
                        </td>
                      </tr>
                    ))}
                  </tbody>
                </table>
                <div className="flex w-[17px] flex-col items-center border-r border-[#8a8a8a] bg-[#f0f0f0]">
                  <button aria-label="向上滚动" className="grid h-[17px] place-items-center"><Chevron dir="up" /></button>
                  <div className="h-[91px] w-full bg-[#cdcdcd]" />
                  <button aria-label="向下滚动" className="mt-auto grid h-[17px] place-items-center"><Chevron dir="down" /></button>
                </div>
              </div>
              <div role="tablist" className="flex h-5 gap-0.5">
                {["日志信息", "回显信息", "本地功能", "数字签名"].map((t, i) => (
                  <button
                    key={t}
                    role="tab"
                    aria-selected={i === 0}
                    className={`w-[57px] rounded-b-sm border-r-2 border-b-2 border-[#8a8a8a] whitespace-nowrap ${i === 0 ? "border-r-0" : ""}`}
                  >
                    {t}
                  </button>
                ))}
              </div>
            </section>

            {/* Monitor panel */}
            <section className="flex min-w-0 flex-1 flex-col border-l-2 border-[#6f6f6f]">
              <div className="flex h-[149px] gap-2">
                <Meter name="cpu" value="25%" nameColor="text-[#f4f02a]" valueColor="text-[#22e83a]" dim="h-[92px]" lit="h-[18px]" tail="flex-1" />
                <Meter name="mem" value="80%" nameColor="text-[#22e8d8]" valueColor="text-[#e02412]" dim="h-[10px]" lit="h-[76px]" tail="flex-1" />
                <div className="ml-7 flex h-[145px] min-w-0 flex-1 flex-col font-['Liberation_Serif','Noto_Sans_CJK_SC',serif] text-[10px] leading-4 font-bold text-[#19c8ee]">
                  <div className={`relative h-[78px] rounded-l-sm pt-1 pl-1 ${GRID}`}>
                    总流量为: 0.0 KB/s
                    <Blips span={228} points={[[25, 2, 2], [60, 2, 2], [64, 2, 2], [102, 3, 7], [108, 3, 4], [128, 6, 3], [181, 2, 3], [188, 3, 3], [219, 3, 4]]} />
                  </div>
                  <div className="flex flex-1">
                    <div className={`relative w-[115px] rounded-l-sm pt-0.5 pl-1 whitespace-nowrap ${GRID}`}>
                      入站流量为: 0.0 KB/s
                      <Blips span={115} points={[[15, 3, 3], [24, 2, 3], [63, 2, 2], [78, 8, 3], [103, 2, 2]]} />
                    </div>
                    <div className={`relative flex-1 border-l-2 border-[#c9cde8] pt-0.5 pl-1 whitespace-nowrap ${GRID}`}>
                      出站流量为: 0.0 KB/s
                      <Blips span={115} points={[[10, 7, 2], [73, 2, 2], [105, 2, 2]]} />
                    </div>
                  </div>
                </div>
              </div>
              <div className="mt-0.5"><HBar thumb="w-[98%]" /></div>
            </section>
          </div>
        </div>

        {/* Host details */}
        <aside className="flex w-[235px] shrink-0 flex-col border-t border-l-2 border-[#5a5a5a] bg-white">
          <table className="h-[536px] w-full table-fixed border-collapse">
            <thead>
              <tr className="h-6">
                <th className="w-[88px] border-r border-[#e6e6e6] pl-1.5 text-left font-normal">名称</th>
                <th className="pl-1 text-left font-normal">信息</th>
              </tr>
            </thead>
            <tbody>
              {INFO.map(([icon, name, value]) => (
                <tr key={name} className="h-4 leading-3 text-black">
                  <td className="p-0 pl-1 whitespace-nowrap">
                    <div className="flex items-center gap-0.5">
                      <Icon name={icon} className="size-[15px]" />
                      <span><Mixed text={name} /></span>
                    </div>
                  </td>
                  <td className="overflow-hidden p-0 pl-1 whitespace-nowrap">
                    {value === "cpu-masked" ? (
                      <span className="flex items-center">
                        <Mixed text="A" />
                        <span className="h-3 w-[118px] shrink-0 bg-[#dcdcdc]" />
                        <Mixed text=". F" />
                      </span>
                    ) : value === "mac-masked" ? (
                      <span className="block h-3.5 w-[108px] bg-[#dfdfdf]" />
                    ) : (
                      <Mixed text={value} />
                    )}
                  </td>
                </tr>
              ))}
            </tbody>
          </table>
          <div className="mt-auto pb-0.5"><HBar thumb="w-2/5" /></div>
        </aside>
      </div>

      {/* Status bar */}
      <footer className="flex h-[18px] shrink-0 items-center border-t border-[#d5d5d5] pl-0.5 whitespace-nowrap">
        <Icon name="hosts" className="size-4" />
        <span className="ml-1 w-[530px]">192.168.216.151</span>
        <Icon name="transfer" className="size-3.5" />
        <span className="ml-1 w-[188px]">发送: 0.00 KB/s 接收: 0.00 KB/s</span>
        <span className="flex-1">总发送: 0.00 MB 总接受: 0.00 MB</span>
        <div className="flex h-full w-[158px] items-center gap-0.5 border-l border-[#d9d9d9] pl-1">
          <Icon name="twopc" className="size-4" />
          端口: 25500
        </div>
        <div className="flex h-full w-[105px] items-center gap-0.5 border-l border-[#d9d9d9] pl-1">
          <Icon name="link" className="size-4" />
          连接: 1
        </div>
        <svg viewBox="0 0 10 10" className="mr-1 size-2.5 self-end" aria-hidden="true">
          <path d="M8 0h2v2H8zM4 4h2v2H4zM8 4h2v2H8zM0 8h2v2H0zM4 8h2v2H4zM8 8h2v2H8z" fill="#bdbdbd" />
        </svg>
      </footer>

      <Menu items={MENU} label="主机菜单" className="top-[188px] left-[391px] h-[252px] w-[120px]" />
      <Menu items={SUBMENU} label="增强功能" className="top-[236px] left-[509px] h-[453px] w-[163px]" />

      <Watermarks />
    </div>
  );
}
